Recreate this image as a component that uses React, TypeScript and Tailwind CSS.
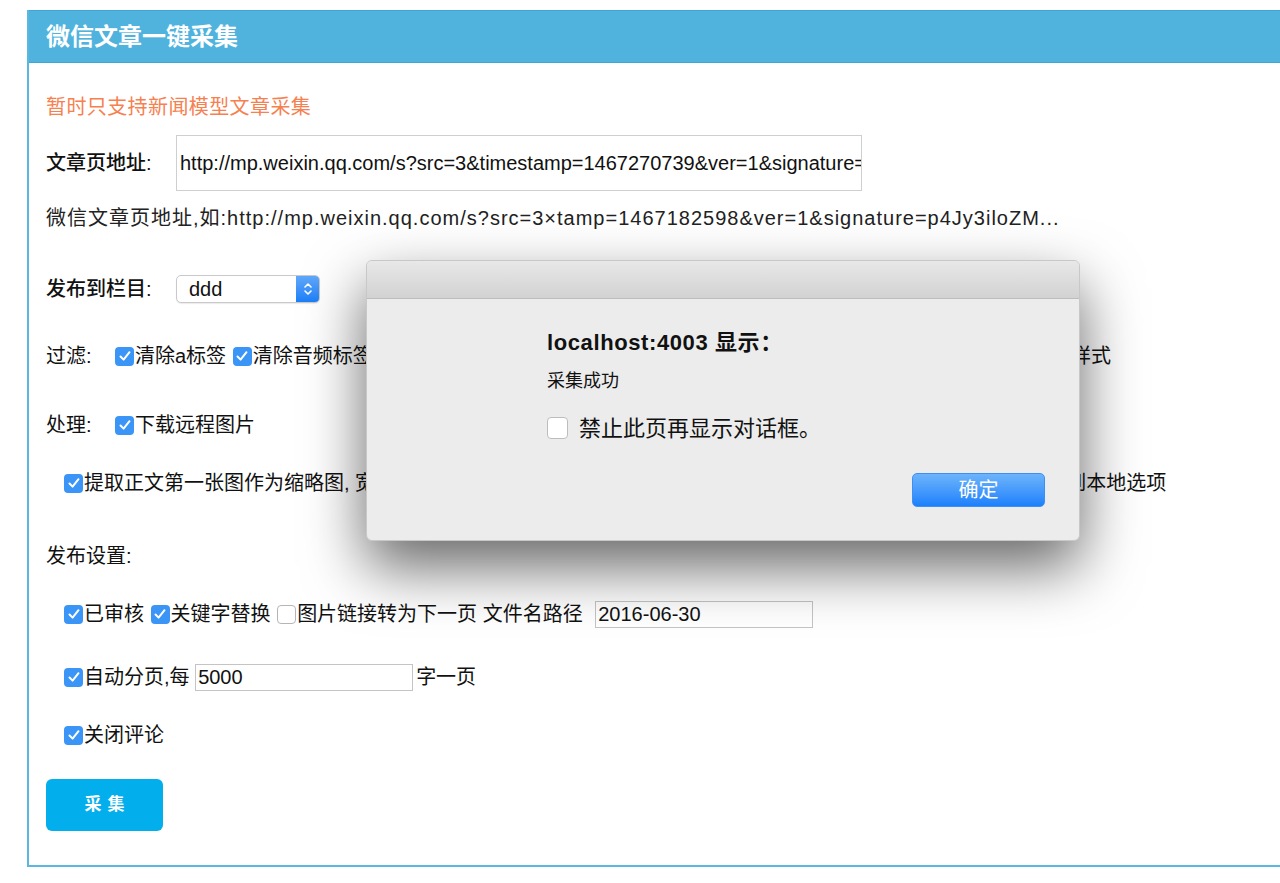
import React from "react";

const Check = ({ on = true }: { on?: boolean }) =>
  on ? (
    <span className="mx-[1px] inline-flex h-[19px] w-[19px] shrink-0 items-center justify-center rounded-[4px] bg-[#3a95f7]">
      <svg width="14" height="14" viewBox="0 0 14 14">
        <path d="M2.5 7.5 L5.6 10.6 L11.5 3.2" fill="none" stroke="#fff" strokeWidth="2" strokeLinecap="round" strokeLinejoin="round" />
      </svg>
    </span>
  ) : (
    <span className="mx-[1px] inline-block h-[19px] w-[19px] shrink-0 rounded-[4px] border border-[#b5b5b5] bg-white" />
  );

export default function App() {
  const font = { fontFamily: '"Liberation Sans", "Noto Sans CJK SC", sans-serif' };
  return (
    <div className="relative h-[883px] w-[1280px] overflow-hidden bg-white text-[20px] text-[#111]" style={font}>
      <div className="ml-[27px] mt-[10px] w-[1320px] border-b-2 border-l-2 border-[#5ab7df]">
        <div className="flex h-[53px] items-center border-y border-[#3fa6d4] bg-[#4fb3de] pl-[17px] text-[24px] font-bold text-white">
          微信文章一键采集
        </div>
        <div className="pl-[17px] pb-[34px]">
          <div className="mt-[30px] flex h-[28px] items-center text-[20px] tracking-[0.4px] text-[#f7804f]">暂时只支持新闻模型文章采集</div>

          <div className="mt-[14px] flex h-[56px] items-center">
            <span className="w-[130px] font-medium">文章页地址:</span>
            <div className="flex h-[56px] w-[686px] items-center overflow-hidden whitespace-nowrap border border-[#cfcfcf] pl-[3px]">
              http://mp.weixin.qq.com/s?src=3&amp;timestamp=1467270739&amp;ver=1&amp;signature=p4Jy3iloZM
            </div>
          </div>

          <div className="mt-[14px] flex h-[26px] items-center whitespace-nowrap tracking-[1px] text-[#222]">
            微信文章页地址,如:http://mp.weixin.qq.com/s?src=3×tamp=1467182598&amp;ver=1&amp;signature=p4Jy3iloZM...
          </div>

          <div className="mt-[44px] flex h-[28px] items-center">
            <span className="w-[130px] font-medium">发布到栏目:</span>
            <div className="flex h-[28px] w-[144px] items-center justify-between overflow-hidden rounded-[5px] border border-[#c9c9c9] bg-white shadow-[0_1px_1px_rgba(0,0,0,0.08)]">
              <span className="pl-[12px]">ddd</span>
              <span className="flex h-full w-[23px] items-center justify-center bg-gradient-to-b from-[#5fa8fb] to-[#1a7ff8]">
                <svg width="10" height="16" viewBox="0 0 10 16">
                  <path d="M2 6 L5 3 L8 6 M2 10 L5 13 L8 10" fill="none" stroke="#fff" strokeWidth="1.6" strokeLinecap="round" strokeLinejoin="round" />
                </svg>
              </span>
            </div>
          </div>

          <div className="mt-[39px] flex h-[28px] items-center whitespace-nowrap">
            <span className="w-[68px]">过滤:</span>
            <Check />清除a标签&nbsp;<Check />清除音频标签&nbsp;<Check />清除视频标签&nbsp;<Check />清除iframe标签&nbsp;<Check />清除script标签&nbsp;<Check />清除img标签&nbsp;<Check />清除css样式
          </div>

          <div className="mt-[41px] flex h-[28px] items-center whitespace-nowrap">
            <span className="w-[68px]">处理:</span>
            <Check />下载远程图片
          </div>

          <div className="mt-[30px] flex h-[28px] items-center whitespace-nowrap pl-[17px]">
            <Check />提取正文第一张图作为缩略图, 宽度和高度将使用系统默认的缩略图尺寸设置, 此功能需要同时勾选下载远程图片到本地选项
          </div>

          <div className="mt-[45px] flex h-[28px] items-center">发布设置:</div>

          <div className="mt-[30px] flex h-[28px] items-center whitespace-nowrap pl-[17px]">
            <Check />已审核&nbsp;<Check />关键字替换&nbsp;<Check on={false} />图片链接转为下一页 文件名路径&nbsp;
            <div className="ml-[7px] flex h-[27px] w-[218px] items-center border border-[#c4c4c4] pl-[2px]">2016-06-30</div>
          </div>

          <div className="mt-[35px] flex h-[28px] items-center whitespace-nowrap pl-[17px]">
            <Check />自动分页,每&nbsp;
            <div className="flex h-[27px] w-[218px] items-center border border-[#c4c4c4] pl-[2px]">5000</div>
            <span className="ml-[3px]">字一页</span>
          </div>

          <div className="mt-[30px] flex h-[28px] items-center whitespace-nowrap pl-[17px]">
            <Check />关闭评论
          </div>

          <button className="mt-[30px] flex h-[52px] w-[117px] items-center justify-center rounded-[6px] bg-[#03aeec] text-[17px] font-bold tracking-[6px] text-white">
            <span className="pl-[6px]">采集</span>
          </button>
        </div>
      </div>

      <div className="absolute left-[366px] top-[260px] h-[281px] w-[714px] overflow-hidden rounded-[6px] border border-[#c8c8c8] bg-[#ececec] shadow-[0_26px_60px_rgba(0,0,0,0.6)]">
        <div className="h-[38px] border-b border-[#bdbdbd] bg-gradient-to-b from-[#e9e8e9] to-[#d3d2d3]" />
        <div className="pl-[180px]">
          <div className="mt-[28px] flex h-[30px] items-center text-[22px] font-bold tracking-[0.6px] text-[#111]">localhost:4003 显示：</div>
          <div className="mt-[12px] flex h-[24px] items-center text-[18px]">采集成功</div>
          <div className="mt-[22px] flex h-[26px] items-center text-[22px]">
            <span className="mr-[11px] inline-block h-[22px] w-[21px] rounded-[4px] border border-[#bdbdbd] bg-white" />
            禁止此页再显示对话框。
          </div>
        </div>
        <div className="mt-[32px] flex justify-end pr-[34px]">
          <button className="flex h-[34px] w-[133px] items-center justify-center rounded-[5px] border border-[#3b8ff5] bg-gradient-to-b from-[#6cb4fb] to-[#1a80fb] text-[20px] text-white">
            确定
          </button>
        </div>
      </div>
    </div>
  );
}
